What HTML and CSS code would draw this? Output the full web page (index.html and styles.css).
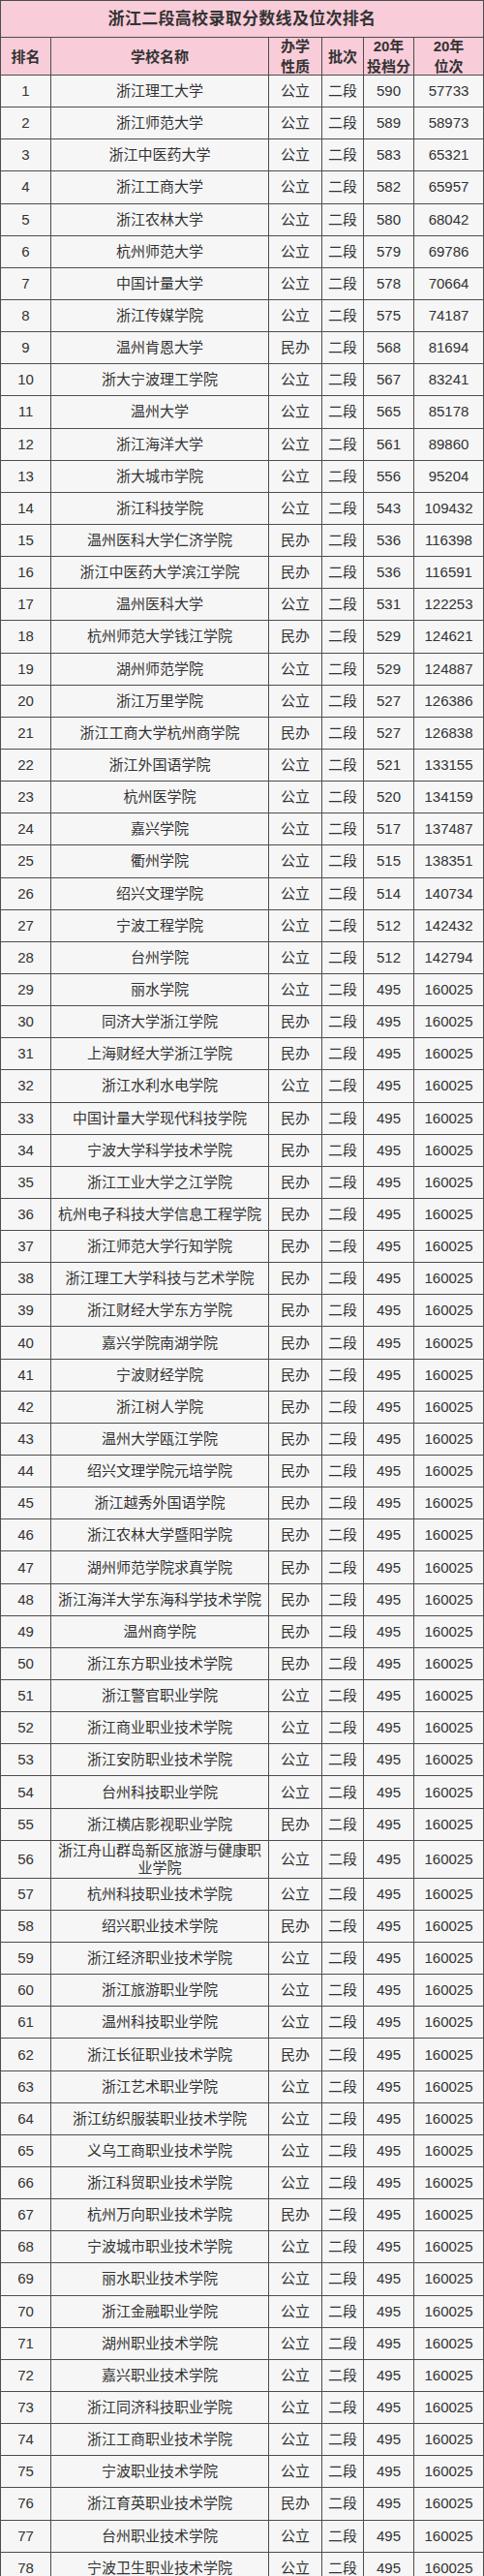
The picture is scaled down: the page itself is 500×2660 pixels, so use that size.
FILE: index.html
```html
<!DOCTYPE html>
<html lang="zh-CN">
<head>
<meta charset="utf-8">
<title>浙江二段高校录取分数线及位次排名</title>
<link rel="stylesheet" href="styles.css">
</head>
<body>
<div class="table" id="t">
  <div class="cell title">浙江二段高校录取分数线及位次排名</div>
  <div class="cell head">排名</div>
  <div class="cell head">学校名称</div>
  <div class="cell head">办学<br>性质</div>
  <div class="cell head">批次</div>
  <div class="cell head">20年<br>投档分</div>
  <div class="cell head">20年<br>位次</div>
</div>
<script src="app.js"></script>
</body>
</html>
```
FILE: app.js
```js
const rows = [
["浙江理工大学","公立",590,57733],
["浙江师范大学","公立",589,58973],
["浙江中医药大学","公立",583,65321],
["浙江工商大学","公立",582,65957],
["浙江农林大学","公立",580,68042],
["杭州师范大学","公立",579,69786],
["中国计量大学","公立",578,70664],
["浙江传媒学院","公立",575,74187],
["温州肯恩大学","民办",568,81694],
["浙大宁波理工学院","公立",567,83241],
["温州大学","公立",565,85178],
["浙江海洋大学","公立",561,89860],
["浙大城市学院","公立",556,95204],
["浙江科技学院","公立",543,109432],
["温州医科大学仁济学院","民办",536,116398],
["浙江中医药大学滨江学院","民办",536,116591],
["温州医科大学","公立",531,122253],
["杭州师范大学钱江学院","民办",529,124621],
["湖州师范学院","公立",529,124887],
["浙江万里学院","公立",527,126386],
["浙江工商大学杭州商学院","民办",527,126838],
["浙江外国语学院","公立",521,133155],
["杭州医学院","公立",520,134159],
["嘉兴学院","公立",517,137487],
["衢州学院","公立",515,138351],
["绍兴文理学院","公立",514,140734],
["宁波工程学院","公立",512,142432],
["台州学院","公立",512,142794],
["丽水学院","公立"],
["同济大学浙江学院","民办"],
["上海财经大学浙江学院","民办"],
["浙江水利水电学院","公立"],
["中国计量大学现代科技学院","民办"],
["宁波大学科学技术学院","民办"],
["浙江工业大学之江学院","民办"],
["杭州电子科技大学信息工程学院","民办"],
["浙江师范大学行知学院","民办"],
["浙江理工大学科技与艺术学院","民办"],
["浙江财经大学东方学院","民办"],
["嘉兴学院南湖学院","民办"],
["宁波财经学院","民办"],
["浙江树人学院","民办"],
["温州大学瓯江学院","民办"],
["绍兴文理学院元培学院","民办"],
["浙江越秀外国语学院","民办"],
["浙江农林大学暨阳学院","民办"],
["湖州师范学院求真学院","民办"],
["浙江海洋大学东海科学技术学院","民办"],
["温州商学院","民办"],
["浙江东方职业技术学院","民办"],
["浙江警官职业学院","公立"],
["浙江商业职业技术学院","公立"],
["浙江安防职业技术学院","公立"],
["台州科技职业学院","公立"],
["浙江横店影视职业学院","民办"],
["浙江舟山群岛新区旅游与健康职业学院","公立"],
["杭州科技职业技术学院","公立"],
["绍兴职业技术学院","民办"],
["浙江经济职业技术学院","公立"],
["浙江旅游职业学院","公立"],
["温州科技职业学院","公立"],
["浙江长征职业技术学院","民办"],
["浙江艺术职业学院","公立"],
["浙江纺织服装职业技术学院","公立"],
["义乌工商职业技术学院","公立"],
["浙江科贸职业技术学院","公立"],
["杭州万向职业技术学院","民办"],
["宁波城市职业技术学院","公立"],
["丽水职业技术学院","公立"],
["浙江金融职业学院","公立"],
["湖州职业技术学院","公立"],
["嘉兴职业技术学院","公立"],
["浙江同济科技职业学院","公立"],
["浙江工商职业技术学院","公立"],
["宁波职业技术学院","公立"],
["浙江育英职业技术学院","民办"],
["台州职业技术学院","公立"],
["宁波卫生职业技术学院","公立"]
];
const t = document.getElementById("t");
rows.forEach((r, i) => {
  const vals = [i + 1, r[0], r[1], "二段", r[2] || 495, r[3] || 160025];
  vals.forEach((v, j) => {
    const d = document.createElement("div");
    d.className = "cell data" + (j === 1 ? " name" : "");
    d.textContent = v;
    t.appendChild(d);
  });
});
```
FILE: styles.css
```css
html, body {
  margin: 0;
  padding: 0;
  background: #ffffff;
}
.table {
  display: grid;
  grid-template-columns: 51px 224px 54px 42px 51px 71px;
  grid-template-rows: 37px 38px;
  grid-auto-rows: minmax(32.15px, auto);
  gap: 1px;
  padding: 1px;
  background: #4d4d4d;
  width: 500px;
  box-sizing: border-box;
  font-family: "Liberation Sans", "Noto Sans CJK SC", sans-serif;
  color: #333333;
}
.cell {
  display: flex;
  align-items: center;
  justify-content: center;
  text-align: center;
  font-size: 15px;
  line-height: 18px;
}
.title {
  grid-column: 1 / -1;
  background: #f9ccd9;
  font-size: 17px;
  font-weight: bold;
  letter-spacing: 0.3px;
}
.head {
  background: #f9ccd9;
  font-weight: bold;
  line-height: 21px;
}
.data {
  background: #f6f6f6;
  padding: 1px 0;
}
.name {
  padding: 1px 7px;
}
```
